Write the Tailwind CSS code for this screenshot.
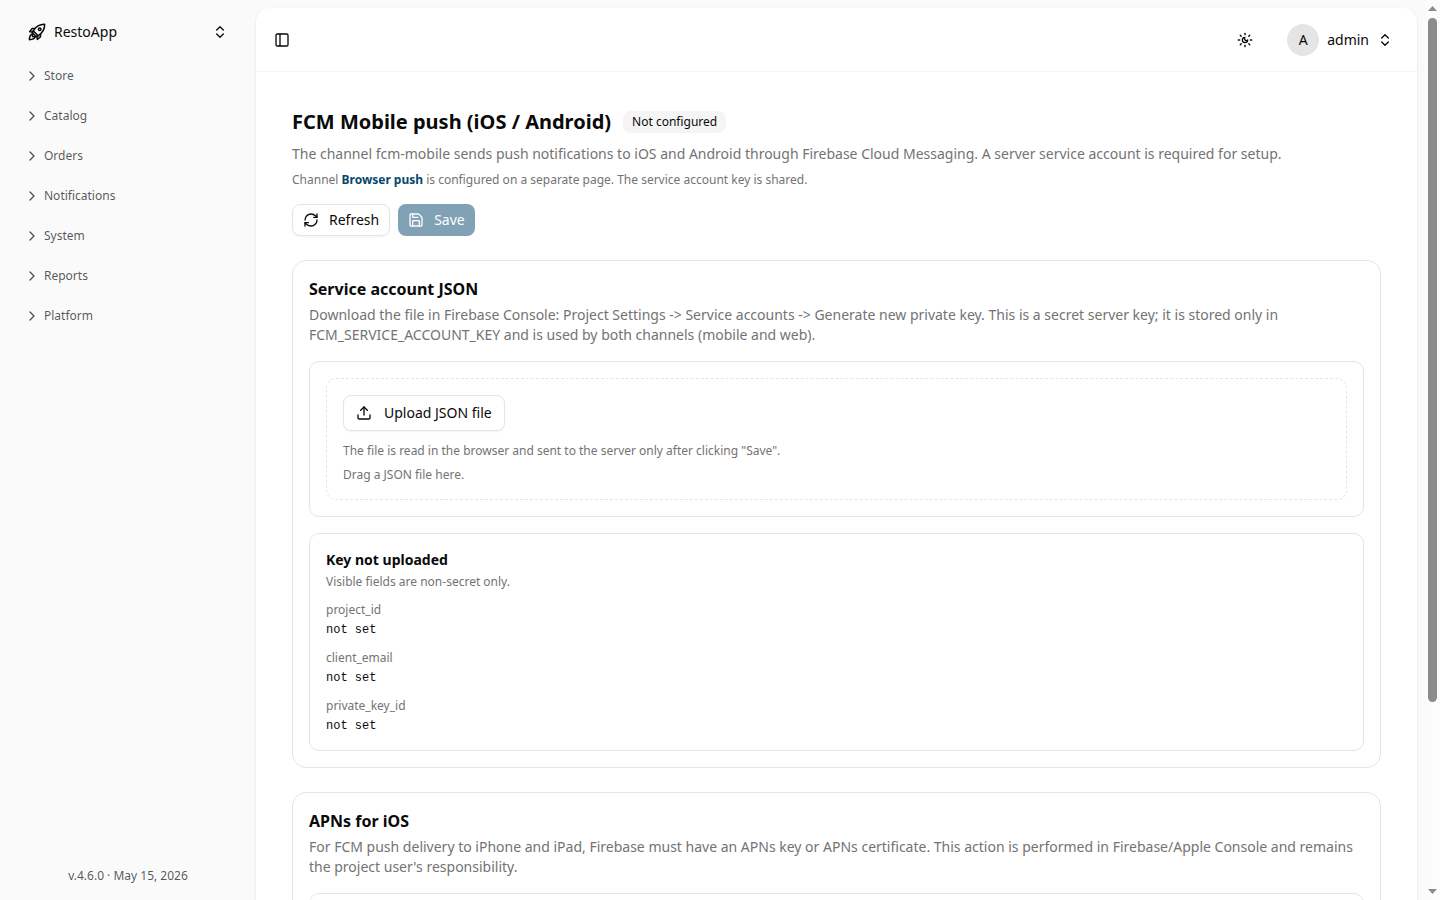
<!DOCTYPE html>
<html lang="en">
<head>
<meta charset="utf-8">
<meta name="viewport" content="width=device-width, initial-scale=1">
<title>RestoApp - FCM Mobile push</title>
<script src="https://cdn.jsdelivr.net/npm/@tailwindcss/browser@4"></script>
</head>
<body class="bg-[#fafafa] font-['Noto_Sans',sans-serif] text-sm text-neutral-950">
<svg class="hidden" aria-hidden="true">
  <symbol id="chev" viewBox="0 0 24 24"><path d="m9 18 6-6-6-6"/></symbol>
  <symbol id="updown" viewBox="0 0 24 24"><path d="m7 15 5 5 5-5"/><path d="m7 9 5-5 5 5"/></symbol>
</svg>
<div class="flex h-screen overflow-hidden">
  <aside class="flex w-64 shrink-0 flex-col p-4">
    <button type="button" class="flex h-8 items-center gap-2 px-3 text-left">
      <svg class="size-[18px]" viewBox="0 0 24 24" fill="none" stroke="currentColor" stroke-width="2" stroke-linejoin="round" aria-hidden="true"><path d="M22.2 1.8c.2 6.400-2.200 11.200-8.700 15.200L7 10.500C11 4 15.800 1.600 22.200 1.800z"/><circle cx="15.600" cy="8.400" r="1.700"/><path d="M9.500 7.200 5.600 7.400 2.200 11.700l5.200.4M16.800 14.500l-.2 3.900-4.300 3.400-.4-5.200"/><path d="M7 10.500 5.600 13l5.400 5.400 2.500-1.400M5.600 14.600c-2.700.6-3.600 3.200-3.800 7.600 4.400-.2 7-1.100 7.600-3.800L6 18z"/></svg>
      <span class="flex-1">RestoApp</span>
      <svg class="size-4" fill="none" stroke="currentColor" stroke-width="2" stroke-linecap="round" stroke-linejoin="round"><use href="#updown"/></svg>
    </button>
    <nav class="mt-3 flex flex-1 flex-col gap-2 text-xs text-neutral-950/70">
      <button type="button" class="flex h-8 items-center gap-1 px-2"><svg class="size-4" fill="none" stroke="currentColor" stroke-width="2" stroke-linecap="round" stroke-linejoin="round"><use href="#chev"/></svg>Store</button>
      <button type="button" class="flex h-8 items-center gap-1 px-2"><svg class="size-4" fill="none" stroke="currentColor" stroke-width="2" stroke-linecap="round" stroke-linejoin="round"><use href="#chev"/></svg>Catalog</button>
      <button type="button" class="flex h-8 items-center gap-1 px-2"><svg class="size-4" fill="none" stroke="currentColor" stroke-width="2" stroke-linecap="round" stroke-linejoin="round"><use href="#chev"/></svg>Orders</button>
      <button type="button" class="flex h-8 items-center gap-1 px-2"><svg class="size-4" fill="none" stroke="currentColor" stroke-width="2" stroke-linecap="round" stroke-linejoin="round"><use href="#chev"/></svg>Notifications</button>
      <button type="button" class="flex h-8 items-center gap-1 px-2"><svg class="size-4" fill="none" stroke="currentColor" stroke-width="2" stroke-linecap="round" stroke-linejoin="round"><use href="#chev"/></svg>System</button>
      <button type="button" class="flex h-8 items-center gap-1 px-2"><svg class="size-4" fill="none" stroke="currentColor" stroke-width="2" stroke-linecap="round" stroke-linejoin="round"><use href="#chev"/></svg>Reports</button>
      <button type="button" class="flex h-8 items-center gap-1 px-2"><svg class="size-4" fill="none" stroke="currentColor" stroke-width="2" stroke-linecap="round" stroke-linejoin="round"><use href="#chev"/></svg>Platform</button>
    </nav>
    <p class="text-center text-xs text-neutral-950/70">v.4.6.0 · May 15, 2026</p>
  </aside>

  <div class="mt-2 mr-2 min-w-0 flex-1">
  <div class="min-h-full rounded-[14px] bg-white shadow-sm">
    <header class="flex h-16 items-center justify-between border-b border-neutral-100 pr-6 pl-3">
      <button type="button" aria-label="Toggle sidebar" class="flex size-7 items-center justify-center">
        <svg class="size-4" viewBox="0 0 24 24" fill="none" stroke="currentColor" stroke-width="2" stroke-linecap="round" stroke-linejoin="round"><rect width="18" height="18" x="3" y="3" rx="2"/><path d="M9 3v18"/></svg>
      </button>
      <div class="flex items-center gap-6">
        <button type="button" aria-label="Toggle theme" class="flex size-9 items-center justify-center">
          <svg class="size-4" viewBox="0 0 24 24" fill="none" stroke="currentColor" stroke-width="2" stroke-linecap="round" stroke-linejoin="round"><path d="M12 8a2.83 2.83 0 0 0 4 4 4 4 0 1 1-4-4"/><path d="M12 2v2"/><path d="M12 20v2"/><path d="m4.9 4.9 1.4 1.4"/><path d="m17.7 17.7 1.4 1.4"/><path d="M2 12h2"/><path d="M20 12h2"/><path d="m6.3 17.7-1.4 1.4"/><path d="m19.1 4.9-1.4 1.4"/></svg>
        </button>
        <button type="button" class="flex items-center gap-2">
          <span class="flex size-8 items-center justify-center rounded-full bg-neutral-200">A</span>
          <span>admin</span>
          <svg class="size-4" fill="none" stroke="currentColor" stroke-width="2" stroke-linecap="round" stroke-linejoin="round"><use href="#updown"/></svg>
        </button>
      </div>
    </header>

    <main class="flex flex-col gap-6 p-9">
      <section>
        <div class="flex items-center gap-3">
          <h1 class="text-xl font-bold">FCM Mobile push (iOS / Android)</h1>
          <span class="rounded-lg border border-transparent bg-neutral-100 px-2 py-0.5 text-xs">Not configured</span>
        </div>
        <p class="mt-2 text-neutral-500">The channel fcm-mobile sends push notifications to iOS and Android through Firebase Cloud Messaging. A server service account is required for setup.</p>
        <p class="mt-2 text-xs text-neutral-500">Channel <a href="#" class="font-bold text-[#05476b]">Browser push</a> is configured on a separate page. The service account key is shared.</p>
        <div class="mt-4 flex gap-2">
          <button type="button" class="flex h-8 items-center gap-2.5 rounded-lg border border-neutral-200 bg-white px-2.5 shadow-xs">
            <svg class="size-4" viewBox="0 0 24 24" fill="none" stroke="currentColor" stroke-width="2" stroke-linecap="round" stroke-linejoin="round"><path d="M3 12a9 9 0 0 1 9-9 9.75 9.75 0 0 1 6.74 2.74L21 8"/><path d="M21 3v5h-5"/><path d="M21 12a9 9 0 0 1-9 9 9.75 9.75 0 0 1-6.74-2.74L3 16"/><path d="M8 16H3v5"/></svg>
            Refresh
          </button>
          <button type="button" disabled class="flex h-8 items-center gap-2.5 rounded-lg bg-[#05476b] px-2.5 text-white opacity-50">
            <svg class="size-4" viewBox="0 0 24 24" fill="none" stroke="currentColor" stroke-width="2" stroke-linecap="round" stroke-linejoin="round"><path d="M15.2 3a2 2 0 0 1 1.4.6l3.8 3.8a2 2 0 0 1 .6 1.4V19a2 2 0 0 1-2 2H5a2 2 0 0 1-2-2V5a2 2 0 0 1 2-2z"/><path d="M17 21v-7a1 1 0 0 0-1-1H8a1 1 0 0 0-1 1v7"/><path d="M7 3v4a1 1 0 0 0 1 1h7"/></svg>
            Save
          </button>
        </div>
      </section>

      <section class="rounded-[14px] border border-neutral-200 p-4">
        <h2 class="text-base font-bold">Service account JSON</h2>
        <p class="mt-1 text-neutral-500">Download the file in Firebase Console: Project Settings -&gt; Service accounts -&gt; Generate new private key. This is a secret server key; it is stored only in FCM_SERVICE_ACCOUNT_KEY and is used by both channels (mobile and web).</p>
        <div class="mt-4 rounded-[10px] border border-neutral-200 p-4">
          <div class="rounded-[10px] border border-dashed border-neutral-200 p-4 text-xs text-neutral-500">
            <button type="button" class="flex h-9 items-center gap-3 rounded-lg border border-neutral-200 bg-white px-3 text-sm text-neutral-950 shadow-xs">
              <svg class="size-4" viewBox="0 0 24 24" fill="none" stroke="currentColor" stroke-width="2" stroke-linecap="round" stroke-linejoin="round"><path d="M12 3v12"/><path d="m17 8-5-5-5 5"/><path d="M21 15v4a2 2 0 0 1-2 2H5a2 2 0 0 1-2-2v-4"/></svg>
              Upload JSON file
            </button>
            <p class="mt-3">The file is read in the browser and sent to the server only after clicking "Save".</p>
            <p class="mt-2">Drag a JSON file here.</p>
          </div>
        </div>
        <div class="mt-4 rounded-[10px] border border-neutral-200 p-4">
          <h3 class="font-bold">Key not uploaded</h3>
          <p class="mt-1 text-xs text-neutral-500">Visible fields are non-secret only.</p>
          <dl class="mt-3 flex flex-col gap-3 text-xs">
            <div class="flex flex-col gap-1"><dt class="text-neutral-500">project_id</dt><dd class="font-['Liberation_Mono',monospace]">not set</dd></div>
            <div class="flex flex-col gap-1"><dt class="text-neutral-500">client_email</dt><dd class="font-['Liberation_Mono',monospace]">not set</dd></div>
            <div class="flex flex-col gap-1"><dt class="text-neutral-500">private_key_id</dt><dd class="font-['Liberation_Mono',monospace]">not set</dd></div>
          </dl>
        </div>
      </section>

      <section class="rounded-[14px] border border-neutral-200 p-4">
        <h2 class="text-base font-bold">APNs for iOS</h2>
        <p class="mt-1 text-neutral-500">For FCM push delivery to iPhone and iPad, Firebase must have an APNs key or APNs certificate. This action is performed in Firebase/Apple Console and remains the project user's responsibility.</p>
        <div class="mt-4 h-24 rounded-[10px] border border-neutral-200"></div>
      </section>
    </main>
  </div>
  </div>

  <!-- Page scrollbar -->
  <div class="flex w-[15px] shrink-0 flex-col items-center justify-between bg-[#fcfcfc] py-1.5" aria-hidden="true">
    <svg class="h-[5px] w-[9px] shrink-0" viewBox="0 0 9 5"><path d="M4.5 0 9 5H0z" fill="#8b8b8b"/></svg>
    <div class="mt-[7px] mb-auto h-[77%] w-[9px] rounded-full bg-[#8b8b8b]"></div>
    <svg class="h-[5px] w-[9px] shrink-0" viewBox="0 0 9 5"><path d="M4.5 5 9 0H0z" fill="#8b8b8b"/></svg>
  </div>
</div>
</body>
</html>
